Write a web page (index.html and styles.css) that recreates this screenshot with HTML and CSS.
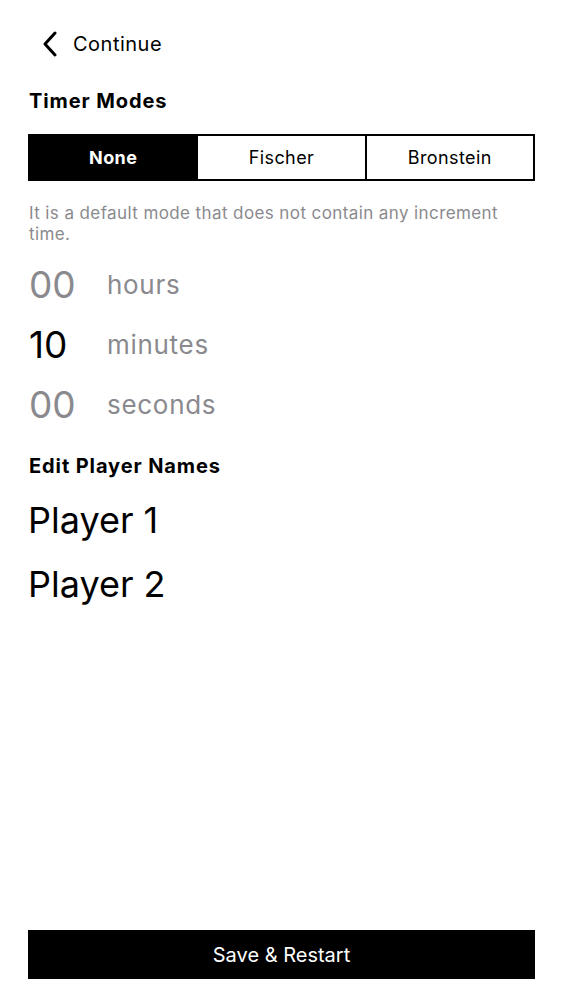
FILE: index.html
```html
<!DOCTYPE html>
<html>
<head>
<meta charset="utf-8">
<link rel="stylesheet" href="styles.css">
</head>
<body>
<div class="page">
  <div class="nav">
    <svg class="chev" width="16" height="26" viewBox="0 0 16 26"><path d="M13 2 L3 13 L13 24" fill="none" stroke="#000" stroke-width="3" stroke-linecap="round" stroke-linejoin="round"/></svg>
    <span class="nav-title">Continue</span>
  </div>
  <div class="content">
    <h2 class="section-title">Timer Modes</h2>
    <div class="segmented">
      <div class="seg active">None</div>
      <div class="seg">Fischer</div>
      <div class="seg">Bronstein</div>
    </div>
    <p class="desc">It is a default mode that does not contain any increment time.</p>
    <div class="times">
      <div class="time-row"><span class="num">00</span><span class="unit">hours</span></div>
      <div class="time-row"><span class="num set">10</span><span class="unit">minutes</span></div>
      <div class="time-row"><span class="num">00</span><span class="unit">seconds</span></div>
    </div>
    <h2 class="section-title names-title">Edit Player Names</h2>
    <div class="player">Player 1</div>
    <div class="player">Player 2</div>
  </div>
  <div class="footer">
    <button class="save">Save &amp; Restart</button>
  </div>
</div>
</body>
</html>
```
FILE: styles.css
```css
* { box-sizing: border-box; }
html, body { margin: 0; padding: 0; background: #fff; }
body { font-family: Inter, "Noto Sans", sans-serif; color: #000; }
.page { height: 1000px; display: flex; flex-direction: column; padding: 0 28px; }
.nav { display: flex; align-items: center; height: 44px; margin-top: 22px; padding-left: 14px; }
.chev { display: block; margin-right: 15px; }
.nav-title { font-size: 20px; letter-spacing: 0.5px; }
.content { flex: 1; display: flex; flex-direction: column; }
.section-title { font-size: 20px; font-weight: 700; margin: 23px 0 0 1px; line-height: 24px; letter-spacing: 0.9px; }
.segmented { display: flex; margin-top: 21px; border: 2px solid #000; height: 47px; }
.seg { flex: 1; display: flex; align-items: center; justify-content: center; font-size: 18px; letter-spacing: 0.4px; border-left: 2px solid #000; }
.seg:first-child { border-left: none; }
.seg.active { background: #000; color: #fff; font-weight: 700; }
.desc { margin: 22px 0 0 1px; font-size: 17px; line-height: 21px; color: #8a8a8e; letter-spacing: 0.4px; }
.times { margin-top: 9px; display: flex; flex-direction: column; }
.time-row { display: flex; align-items: center; height: 60px; }
.num { width: 79px; font-size: 37px; color: #8a8a8e; padding-left: 1px; }
.num.set { color: #000; }
.unit { font-size: 26px; color: #8a8a8e; letter-spacing: 0.7px; }
.names-title { margin-top: 20px; }
.player { font-size: 36px; height: 64px; display: flex; align-items: center; }
.names-title + .player { margin-top: 10px; }
.footer { padding-bottom: 21px; }
.save { width: 100%; height: 49px; background: #000; color: #fff; border: none; font-family: Inter, "Noto Sans", sans-serif; font-size: 20px; }
```
